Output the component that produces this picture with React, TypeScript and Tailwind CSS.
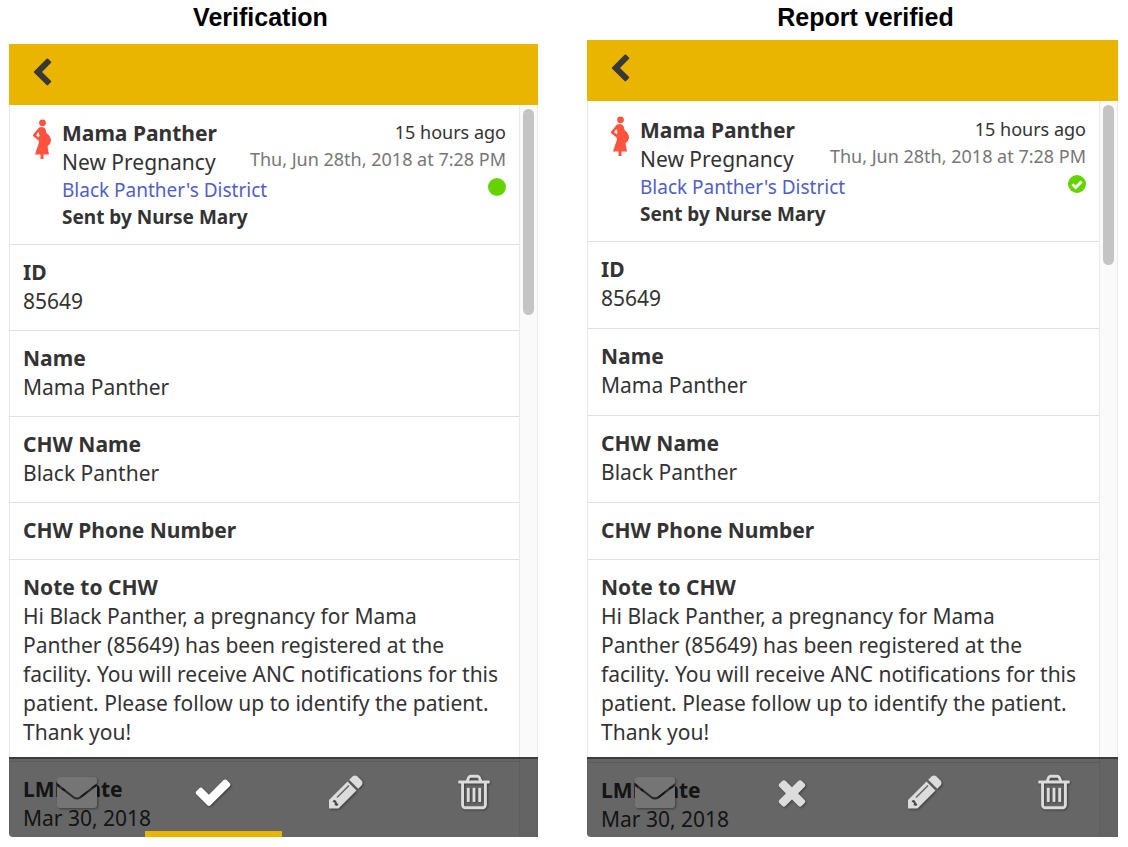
import type { ReactNode } from "react";

type IconProps = { d: string; className: string };

const PATHS = {
  chevron:
    "M1427 301l-531 531 531 531q19 19 19 45t-19 45l-166 166q-19 19-45 19t-45-19l-742-742q-19-19-19-45t19-45l742-742q19-19 45-19t45 19l166 166q19 19 19 45t-19 45z",
  check:
    "M1671 566q0 40-28 68l-724 724-136 136q-28 28-68 28t-68-28l-136-136-362-362q-28-28-28-68t28-68l136-136q28-28 68-28t68 28l294 295 656-657q28-28 68-28t68 28l136 136q28 28 28 68z",
  times:
    "M1490 1322q0 40-28 68l-136 136q-28 28-68 28t-68-28l-294-294-294 294q-28 28-68 28t-68-28l-136-136q-28-28-28-68t28-68l294-294-294-294q-28-28-28-68t28-68l136-136q28-28 68-28t68 28l294 294 294-294q28-28 68-28t68 28l136 136q28 28 28 68t-28 68l-294 294 294 294q28 28 28 68z",
  trash:
    "M704 736v576q0 14-9 23t-23 9h-64q-14 0-23-9t-9-23v-576q0-14 9-23t23-9h64q14 0 23 9t9 23zm256 0v576q0 14-9 23t-23 9h-64q-14 0-23-9t-9-23v-576q0-14 9-23t23-9h64q14 0 23 9t9 23zm256 0v576q0 14-9 23t-23 9h-64q-14 0-23-9t-9-23v-576q0-14 9-23t23-9h64q14 0 23 9t9 23zm128 724v-948h-896v948q0 22 7 40.5t14.5 27 10.5 8.5h832q3 0 10.5-8.5t14.5-27 7-40.5zm-672-1076h448l-48-117q-7-9-17-11h-317q-10 2-17 11zm928 32v64q0 14-9 23t-23 9h-96v948q0 83-47 143.5t-113 60.5h-832q-66 0-113-58.5t-47-141.5v-952h-96q-14 0-23-9t-9-23v-64q0-14 9-23t23-9h309l70-167q15-37 54-63t79-26h320q40 0 79 26t54 63l70 167h309q14 0 23 9t9 23z",
};

function Icon({ d, className }: IconProps) {
  return (
    <svg viewBox="0 0 1792 1792" fill="currentColor" className={className} aria-hidden="true">
      <path d={d} />
    </svg>
  );
}

function Envelope() {
  return (
    <svg viewBox="0 0 40 31" className="h-[31px] w-10 drop-shadow-[1px_1px_1px_rgba(0,0,0,0.4)]" fill="#757575" aria-hidden="true">
      <path d="M3 0H37Q40 0 40 3V6L23 19.500Q20 21.500 17 19.500L0 6V3Q0 0 3 0Z" />
      <path d="M0 9L16.500 21.500Q20 24 23.500 21.500L40 9V28Q40 31 37 31H3Q0 31 0 28Z" />
      <path d="M0 7.500L16.800 20.500Q20 22.500 23.200 20.500L40 7.500" fill="none" stroke="#1c1c1c" strokeWidth="1.600" opacity="0.700" />
    </svg>
  );
}

function Pencil() {
  return (
    <svg viewBox="0 0 34 34" className="size-[34px] drop-shadow-[1px_1px_1px_rgba(0,0,0,0.4)]" fill="currentColor" aria-hidden="true">
      <path d="M0 25L18.500 6.500L27.500 15.500L9.500 33.500H0Z" />
      <path d="M20.200 4.800L23.500 1.500Q26 -0.500 28.500 1.500L32.500 5.500Q34.500 8 32.500 10.500L29.200 13.800Z" />
      <path d="M8 22.500L20 10.500" stroke="#646464" strokeWidth="1.400" />
      <path d="M3.500 26.500Q5.500 24 7 26L8 28L9.500 29.500L8 31L5.500 30L6 28Z" fill="#484848" />
    </svg>
  );
}

function Pregnant() {
  return (
    <svg viewBox="0 0 20 41" className="h-[41px] w-5" fill="#ff5340" aria-hidden="true">
      <circle cx="10.500" cy="3.800" r="3.400" />
      <path
        fillRule="evenodd"
        d="M7 8.500Q11.500 7 13.500 10L14.500 14Q19 17.500 19 22Q18.500 25 15.500 27.500L17 35.500H11.500V40H8.500V35.500H3L7 23.500L6.500 21.500L1.500 17.500Q0.500 16.500 1.200 15.500ZM6.300 13L4.200 16.200L6.600 18.300L7.600 16.200Z"
      />
    </svg>
  );
}

function Row({ title, roomy, children }: { title: string; roomy?: boolean; children?: ReactNode }) {
  return (
    <section
      className={
        roomy
          ? "border-b border-[#e0e0e0] px-[13px] pb-[15px] pt-[13px]"
          : "border-b border-[#e0e0e0] px-[13px] pb-[14px] pt-[13px]"
      }
    >
      <h3 className="font-bold">{title}</h3>
      {children && <p>{children}</p>}
    </section>
  );
}

function Tab({ label, active, children }: { label: string; active?: boolean; children: ReactNode }) {
  return (
    <button
      type="button"
      aria-label={label}
      className={
        active
          ? "flex justify-center border-b-[6px] border-[#e9b500] pt-[13px] text-white"
          : "flex justify-center pt-[13px] text-[#dcdcdc]"
      }
    >
      <span className="flex h-10 items-center">{children}</span>
    </button>
  );
}

const TAB_ICON = "size-10 drop-shadow-[1px_1px_1px_rgba(0,0,0,0.4)]";

function Phone({ title, verified }: { title: string; verified: boolean }) {
  return (
    <section className="flex flex-col">
      <h1
        className={
          verified
            ? "pl-[26px] pt-[3px] text-center font-['Liberation_Sans',sans-serif] text-[25px] font-bold leading-[29px] text-black"
            : "pr-[26px] pt-[3px] text-center font-['Liberation_Sans',sans-serif] text-[25px] font-bold leading-[29px] text-black"
        }
      >
        {title}
      </h1>
      <div
        className={
          verified
            ? "relative mt-2 flex flex-1 flex-col overflow-hidden rounded-bl"
            : "relative mt-3 flex flex-1 flex-col overflow-hidden rounded-bl"
        }
      >
        <header className="flex h-[61px] items-center bg-[#e9b500] pb-1 pl-[18px]">
          <button type="button" aria-label="Back" className="text-[#383838]">
            <Icon d={PATHS.chevron} className="size-[30px]" />
          </button>
        </header>
        <div className="flex flex-1">
          <div className="min-w-0 flex-1 border-l border-[#e8e8e8]">
            <div
              className={
                verified
                  ? "flex border-b border-[#e0e0e0] pb-[13px] pl-[22px] pr-[13px] pt-[15px]"
                  : "flex border-b border-[#e0e0e0] pb-[13px] pl-[22px] pr-[13px] pt-[14px]"
              }
            >
              <Pregnant />
              <div className="ml-[10px] min-w-0 flex-1 whitespace-nowrap">
                <h2 className="font-bold">Mama Panther</h2>
                <p>New Pregnancy</p>
                <p className="text-[19px] leading-[27px] text-[#5160c4]">Black Panther's District</p>
                <p className="text-[19px] font-bold leading-[27px]">Sent by Nurse Mary</p>
              </div>
              <div className="flex flex-col items-end whitespace-nowrap text-[18px] leading-[27px]">
                <p>15 hours ago</p>
                <p className="text-[#777777]">Thu, Jun 28th, 2018 at 7:28 PM</p>
                <svg viewBox="0 0 18 18" className="mt-[5px] size-[18px]" role="img" aria-label={verified ? "Verified" : "Received"}>
                  <circle cx="9" cy="9" r="9" fill="#65d300" />
                  {verified && (
                    <path d="M4.300 9.300L7.700 12.500L13.600 6.600" fill="none" stroke="#fff" strokeWidth="2.800" />
                  )}
                </svg>
              </div>
            </div>
            <Row title="ID" roomy={verified}>85649</Row>
            <Row title="Name" roomy={verified}>Mama Panther</Row>
            <Row title="CHW Name" roomy={verified}>Black Panther</Row>
            <Row title="CHW Phone Number" />
            <Row title="Note to CHW" roomy={verified}>
              Hi Black Panther, a pregnancy for Mama
              <br />
              Panther (85649) has been registered at the facility. You will receive ANC notifications for this
              patient. Please follow up to identify the patient. Thank you!
            </Row>
            <section className="px-[13px] pb-[3px] pt-[13px]">
              <h3 className="font-bold">LMP Date</h3>
              <p>Mar 30, 2018</p>
            </section>
          </div>
          <div className="flex w-[19px] justify-center border-x border-[#eaeaea] bg-[#fafafa] pt-1">
            <div className={verified ? "h-40 w-[11px] rounded-full bg-[#c4c4c4]" : "h-[206px] w-[11px] rounded-full bg-[#c4c4c4]"} />
          </div>
        </div>
        <nav className="absolute inset-x-0 bottom-0 grid h-20 grid-cols-[34fr_34fr_32fr_32fr] border-t-2 border-[#3c3c3c] bg-black/60">
          <Tab label="Send message">
            <Envelope />
          </Tab>
          <Tab label={verified ? "Remove verification" : "Verify"} active={!verified}>
            <Icon d={verified ? PATHS.times : PATHS.check} className={TAB_ICON} />
          </Tab>
          <Tab label="Edit">
            <Pencil />
          </Tab>
          <Tab label="Delete">
            <Icon d={PATHS.trash} className={TAB_ICON} />
          </Tab>
        </nav>
      </div>
    </section>
  );
}

export default function App() {
  return (
    <main className="min-h-screen bg-white">
      <div className="grid grid-cols-[minmax(0,529fr)_minmax(0,531fr)] gap-[49px] pl-[9px] pr-[10px] font-['Noto_Sans',sans-serif] text-[21px] leading-[29px] text-[#333333]">
        <Phone title="Verification" verified={false} />
        <Phone title="Report verified" verified />
      </div>
    </main>
  );
}
